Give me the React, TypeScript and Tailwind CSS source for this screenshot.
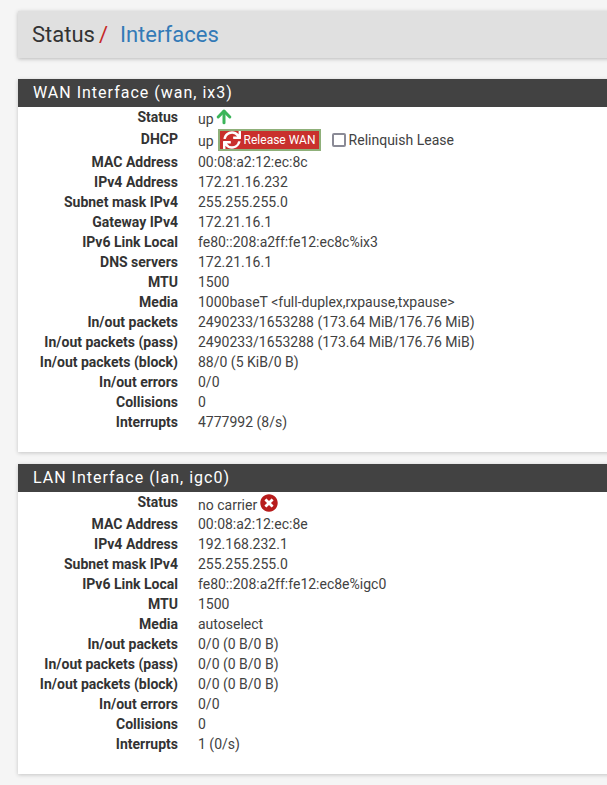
import React from 'react';
import { ArrowUp } from 'lucide-react';
import { FaSync, FaTimesCircle } from 'react-icons/fa';

type Row = { label: string; value: React.ReactNode; rowClass?: string };

const wanRows: Row[] = [
    {
        label: 'Status',
        value: (
            <span className="flex items-center gap-[0px]">
                <span className="mt-[2px]">up</span>
                <ArrowUp size={20} strokeWidth={3.6} className="-mt-[2px] text-[#3cb55a]" />
            </span>
        )
    },
    {
        label: 'DHCP',
        rowClass: 'h-[25px] pt-[2px]',
        value: (
            <span className="flex items-center">
                <span className="mt-[1px]">up</span>
                <span className="ml-[4px] flex h-[22px] w-[103px] items-center border-2 border-[#8fb07a] bg-[#c9302c] pl-[3px] text-[12px] text-white">
                    <FaSync size={18} className="mr-[3px] shrink-0" />
                    Release WAN
                </span>
                <span className="ml-[11px] h-[14px] w-[14px] rounded-[2px] border-2 border-[#8a8a96] bg-white" />
                <span className="ml-[3px]">Relinquish Lease</span>
            </span>
        )
    },
    { label: 'MAC Address', value: '00:08:a2:12:ec:8c' },
    { label: 'IPv4 Address', value: '172.21.16.232' },
    { label: 'Subnet mask IPv4', value: '255.255.255.0' },
    { label: 'Gateway IPv4', value: '172.21.16.1' },
    { label: 'IPv6 Link Local', value: 'fe80::208:a2ff:fe12:ec8c%ix3' },
    { label: 'DNS servers', value: '172.21.16.1' },
    { label: 'MTU', value: '1500' },
    { label: 'Media', value: '1000baseT <full-duplex,rxpause,txpause>' },
    { label: 'In/out packets', value: '2490233/1653288 (173.64 MiB/176.76 MiB)' },
    { label: 'In/out packets (pass)', value: '2490233/1653288 (173.64 MiB/176.76 MiB)' },
    { label: 'In/out packets (block)', value: '88/0 (5 KiB/0 B)' },
    { label: 'In/out errors', value: '0/0' },
    { label: 'Collisions', value: '0' },
    { label: 'Interrupts', value: '4777992 (8/s)' }
];

const lanRows: Row[] = [
    {
        label: 'Status',
        rowClass: 'h-[22px]',
        value: (
            <span className="flex items-center gap-[3px]">
                <span className="mt-[3px]">no carrier</span>
                <FaTimesCircle size={18} className="-mt-[1px] text-[#b71c1c]" />
            </span>
        )
    },
    { label: 'MAC Address', value: '00:08:a2:12:ec:8e' },
    { label: 'IPv4 Address', value: '192.168.232.1' },
    { label: 'Subnet mask IPv4', value: '255.255.255.0' },
    { label: 'IPv6 Link Local', value: 'fe80::208:a2ff:fe12:ec8e%igc0' },
    { label: 'MTU', value: '1500' },
    { label: 'Media', value: 'autoselect' },
    { label: 'In/out packets', value: '0/0 (0 B/0 B)' },
    { label: 'In/out packets (pass)', value: '0/0 (0 B/0 B)' },
    { label: 'In/out packets (block)', value: '0/0 (0 B/0 B)' },
    { label: 'In/out errors', value: '0/0' },
    { label: 'Collisions', value: '0' },
    { label: 'Interrupts', value: '1 (0/s)' }
];

const Panel: React.FC<{ title: string; rows: Row[] }> = ({ title, rows }) => (
    <section className="w-[620px] bg-white pb-[20px] shadow-[0_1px_4px_rgba(0,0,0,0.2)]">
        <h2 className="flex h-[28px] items-center bg-[#424242] pl-[15px] text-[16px] font-normal tracking-[1px] text-white">
            {title}
        </h2>
        {rows.map((row) => (
            <div key={row.label} className={`flex text-[14px] leading-[20px] ${row.rowClass ?? 'h-[20px]'}`}>
                <div className="w-[160px] shrink-0 whitespace-nowrap text-right font-bold text-[#333]">{row.label}</div>
                <div className="ml-[20px] whitespace-nowrap text-[#424242]">{row.value}</div>
            </div>
        ))}
    </section>
);

export default function App() {
    return (
        <div className="h-[785px] w-[607px] overflow-hidden bg-[#f5f5f5] pl-[18px] pt-[11px] font-['Roboto',sans-serif]">
            <header className="flex h-[47px] w-[620px] items-center bg-[#e0e0e0] pl-[14px] text-[22px] shadow-[0_1px_4px_rgba(0,0,0,0.25)]">
                <span className="text-[#333]">Status</span>
                <span className="ml-[4px] text-[#c62828]">/</span>
                <span className="ml-[12px] text-[#337ab7]">Interfaces</span>
            </header>
            <div className="mt-[21px] flex flex-col gap-[12px]">
                <Panel title="WAN Interface (wan, ix3)" rows={wanRows} />
                <Panel title="LAN Interface (lan, igc0)" rows={lanRows} />
            </div>
        </div>
    );
}
